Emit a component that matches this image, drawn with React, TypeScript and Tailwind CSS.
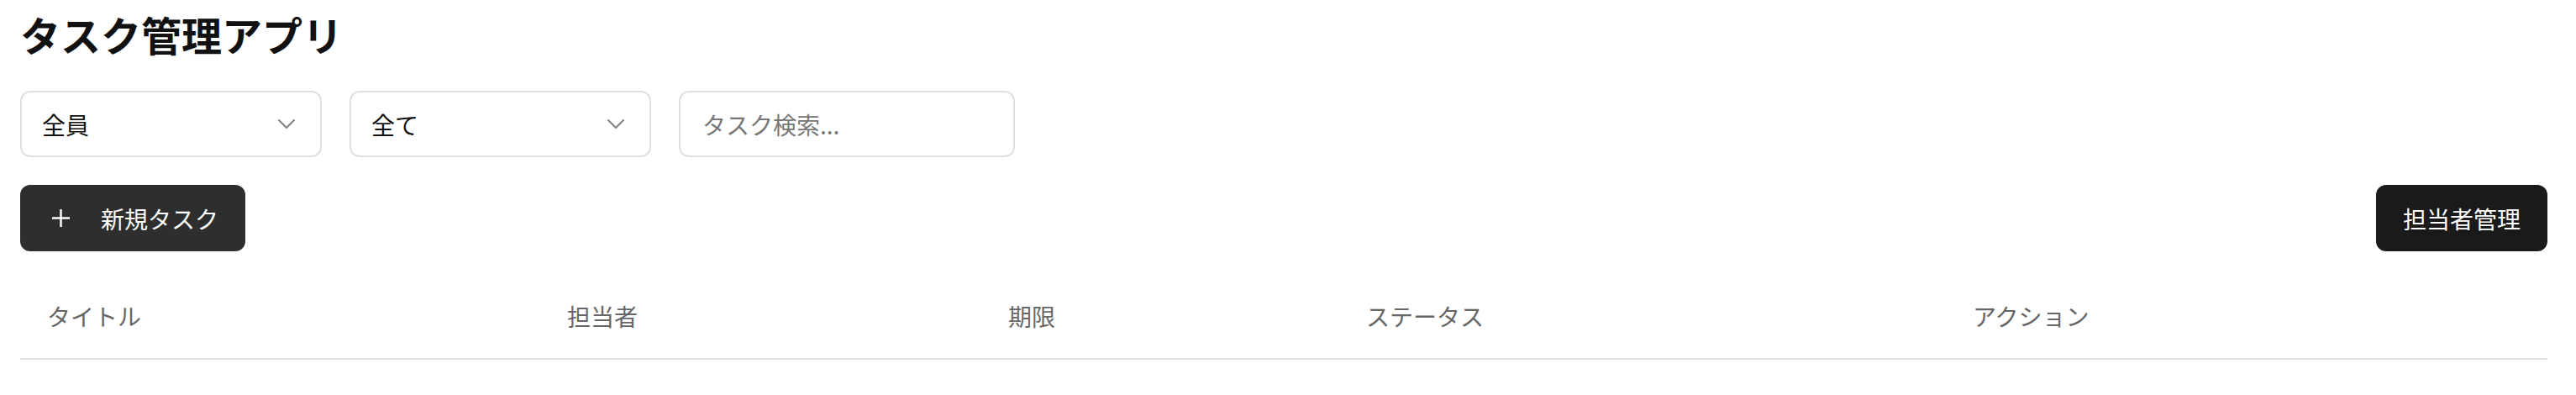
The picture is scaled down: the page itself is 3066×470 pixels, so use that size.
import React, { useState } from 'react';

const font = { fontFamily: '"Noto Sans CJK JP", "Noto Sans", sans-serif' };

function Chevron() {
  return (
    <svg width="20" height="11" viewBox="0 0 20 11" fill="none">
      <polyline points="1,1 10,10 19,1" stroke="#808080" strokeWidth="2" strokeLinecap="round" strokeLinejoin="round" />
    </svg>
  );
}

function PlusIcon() {
  return (
    <svg width="21" height="21" viewBox="0 0 21 21" fill="none">
      <line x1="10.5" y1="0" x2="10.5" y2="21" stroke="white" strokeWidth="2.5" />
      <line x1="0" y1="10.5" x2="21" y2="10.5" stroke="white" strokeWidth="2.5" />
    </svg>
  );
}

function FilterSelect({ label }: { label: string }) {
  return (
    <button className="flex items-center justify-between w-[359px] h-[79px] pl-6 pr-[30px] border-2 border-[#e0e0e0] rounded-[12px] bg-white text-[28px] text-[#111]">
      <span>{label}</span>
      <Chevron />
    </button>
  );
}

const columns = ['タイトル', '担当者', '期限', 'ステータス', 'アクション'];

export default function App() {
  const [query, setQuery] = useState('');

  return (
    <div className="bg-white min-h-[470px] pl-6 pr-[34px]" style={font}>
      <h1 className="pt-2 text-[48px] leading-[64px] font-bold text-[#111] mb-9">タスク管理アプリ</h1>

      <div className="flex gap-[33px]">
        <FilterSelect label="全員" />
        <FilterSelect label="全て" />
        <input
          value={query}
          onChange={(e) => setQuery(e.target.value)}
          placeholder="タスク検索..."
          className="w-[400px] h-[79px] px-[26px] border-2 border-[#e0e0e0] rounded-[12px] text-[28px] text-[#111] placeholder:text-[#777] outline-none"
        />
      </div>

      <div className="flex justify-between items-center mt-[33px]">
        <button className="flex items-center w-[268px] h-[79px] pl-[38px] gap-[37px] bg-[#2e2e2e] text-white text-[28px] rounded-[12px]">
          <PlusIcon />
          新規タスク
        </button>
        <button className="h-[79px] px-8 bg-[#1a1a1a] text-white text-[28px] rounded-[12px]">担当者管理</button>
      </div>

      <table className="w-full table-fixed mt-[26px] border-collapse">
        <colgroup>
          <col className="w-[619px]" />
          <col className="w-[525px]" />
          <col className="w-[426px]" />
          <col className="w-[722px]" />
          <col />
        </colgroup>
        <thead>
          <tr className="border-b-2 border-[#e0e0e0]">
            {columns.map((c) => (
              <th key={c} className="h-[102px] pl-8 text-left font-normal text-[28px] text-[#666]">
                {c}
              </th>
            ))}
          </tr>
        </thead>
        <tbody />
      </table>
    </div>
  );
}
